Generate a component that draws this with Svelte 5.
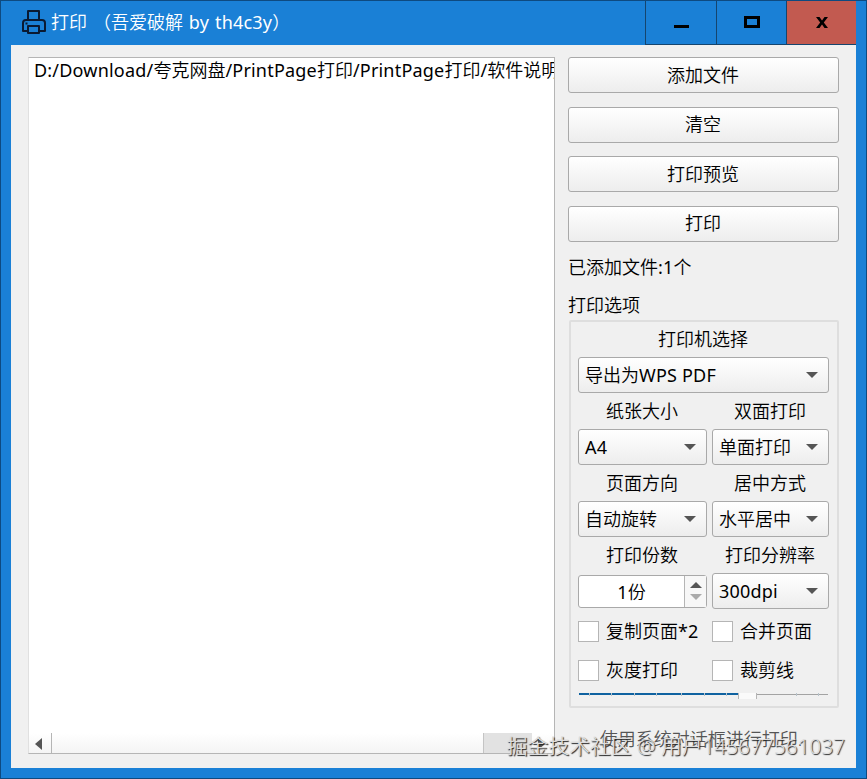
<script lang="ts">
  interface Field {
    label: string;
    value: string;
    kind?: "select" | "spin";
  }

  let files = $state(["D:/Download/夸克网盘/PrintPage打印/PrintPage打印/软件说明"]);
  let level = $state(68);

  const actions = ["添加文件", "清空", "打印预览", "打印"];

  const fields: Field[] = [
    { label: "纸张大小", value: "A4" },
    { label: "双面打印", value: "单面打印" },
    { label: "页面方向", value: "自动旋转" },
    { label: "居中方式", value: "水平居中" },
    { label: "打印份数", value: "1份", kind: "spin" },
    { label: "打印分辨率", value: "300dpi" }
  ];

  const checks = ["复制页面*2", "合并页面", "灰度打印", "裁剪线"];
  const ticks = [4, 13, 22, 31, 41, 50, 59, 87, 96];

  // latin runs get a heavier weight than the chinese around them
  function runs(value: string) {
    return value.match(/[\x20-\x7e]+|[^\x20-\x7e]+/g) ?? [];
  }
</script>

{#snippet mixed(value: string)}{#each runs(value) as run}<span class:latin={run.charCodeAt(0) < 127}>{run}</span>{/each}{/snippet}

{#snippet combo(value: string)}
  <button class="combo">
    <span>{@render mixed(value)}</span>
    <svg width="12" height="6" viewBox="0 0 12 6"><path d="M0 0H12L6 6Z" fill="#555" /></svg>
  </button>
{/snippet}

<div class="window">
  <header>
    <svg class="printer" width="26" height="26" viewBox="0 0 26 26">
      <g fill="none" stroke="#0a1a33" stroke-width="2" stroke-linejoin="round">
        <path d="M7 11V2H18V11" />
        <path d="M7 22H2V14Q2 11 5 11H21Q24 11 24 14V22H18" />
        <path d="M7 17H18V24H7Z" />
      </g>
      <rect x="4.500" y="13.500" width="2" height="2" fill="#0a1a33" />
    </svg>
    <h1>{@render mixed("打印 （吾爱破解 by th4c3y）")}</h1>
    <div class="controls">
      <button aria-label="minimize"><svg width="16" height="16"><path d="M1 11.500H16" stroke="#000" stroke-width="3" /></svg></button>
      <button aria-label="maximize"><svg width="16" height="16"><rect x="1.500" y="2.500" width="13" height="9" fill="none" stroke="#000" stroke-width="3" /></svg></button>
      <button class="close" aria-label="close"><svg width="14" height="14"><path d="M1 1H4.500L7 4.500 9.500 1H13L8.800 6.500 13 12H9.500L7 8.500 4.500 12H1L5.200 6.500Z" fill="#000" /></svg></button>
    </div>
  </header>

  <main>
    <section class="list">
      <ul>
        {#each files as file}
          <li>{@render mixed(file)}</li>
        {/each}
      </ul>
      <div class="scroll">
        <div class="arrow"><svg width="7" height="12"><path d="M7 0V12L0 6Z" fill="#555" /></svg></div>
        <div class="thumb"></div>
        <div class="track"></div>
        <div class="arrow right"><svg width="7" height="12"><path d="M0 0V12L7 6Z" fill="#555" /></svg></div>
      </div>
    </section>

    <aside>
      <div class="actions">
        {#each actions as action}
          <button>{action}</button>
        {/each}
      </div>
      <p class="count">{@render mixed(`已添加文件:${files.length}个`)}</p>
      <p class="legend">打印选项</p>

      <div class="group">
        <div class="field wide">
          <div class="label">打印机选择</div>
          {@render combo("导出为WPS PDF")}
        </div>
        {#each fields as field}
          <div class="field">
            <div class="label">{field.label}</div>
            {#if field.kind === "spin"}
              <div class="spin">
                <div class="value">{@render mixed(field.value)}</div>
                <div class="steps">
                  <svg width="12" height="6"><path d="M0 6H12L6 0Z" fill="#555" /></svg>
                  <svg width="12" height="6"><path d="M0 0H12L6 6Z" fill="#aaa" /></svg>
                </div>
              </div>
            {:else}
              {@render combo(field.value)}
            {/if}
          </div>
        {/each}
        {#each checks as check, i}
          <label class="check" class:last={i > 1}>
            <input type="checkbox" />
            <span>{@render mixed(check)}</span>
          </label>
        {/each}
        <div class="slider">
          <div class="fill" style="width: {level}%"></div>
          {#each ticks as tick}
            <i style="left: {tick}%"></i>
          {/each}
          <div class="knob" style="left: {level - 4}%"></div>
        </div>
      </div>

      <p class="dialog">使用系统对话框进行打印.</p>
    </aside>
  </main>

  <div class="watermark">掘金技术社区 @ 用户145677561037</div>
</div>

<style>
  .window {
    position: relative;
    box-sizing: border-box;
    width: 867px;
    height: 779px;
    padding: 0 10px 10px;
    border: 1px solid #0e4a80;
    background: #1a80d6;
    color: #000;
    font: 350 18px/24px "Noto Sans", "Noto Sans CJK SC", sans-serif;
    overflow: hidden;
  }

  .latin {
    font-weight: 400;
    letter-spacing: 0.2px;
  }

  button {
    font: inherit;
    color: inherit;
    padding: 0;
    box-sizing: border-box;
  }

  svg {
    display: block;
  }

  header {
    display: flex;
    align-items: center;
    height: 44px;
  }

  .printer {
    margin: 0 4px 2px 10px;
  }

  h1 {
    flex: 1;
    margin: 0 0 2px;
    color: #fff;
    font-size: 18px;
    font-weight: 350;
    white-space: nowrap;
    word-spacing: 1px;
  }

  .controls {
    display: flex;
    height: 44px;
    align-self: flex-start;
  }

  .controls button {
    display: grid;
    place-items: center;
    width: 71px;
    border: 0;
    border-left: 1px solid #15456e;
    border-bottom: 1px solid #15456e;
    background: none;
  }

  .controls button:nth-child(2) {
    width: 70px;
  }

  .controls .close {
    width: 70px;
    background: #c25a50;
  }

  main {
    display: flex;
    box-sizing: border-box;
    height: 723px;
    padding: 12px 17px 0;
    background: #f0f0f0;
  }

  .list {
    display: flex;
    flex-direction: column;
    box-sizing: border-box;
    width: 527px;
    height: 697px;
    border: 1px solid #b5b5b5;
    border-left-color: #e0e0e0;
    background: #fff;
  }

  ul {
    flex: 1;
    margin: 0;
    padding: 0 0 0 5px;
    list-style: none;
    overflow: hidden;
    white-space: nowrap;
  }

  .scroll {
    display: flex;
    height: 20px;
    background: linear-gradient(#fff, #f4f4f4);
  }

  .arrow {
    display: grid;
    place-items: center;
    width: 22px;
    border-right: 1px solid #b5b5b5;
  }

  .arrow svg {
    margin: 2px 3px 0 0;
  }

  .thumb {
    width: 431px;
    border-right: 1px solid #c4c4c4;
  }

  .track {
    width: 48px;
    background: #e2e2e2;
  }

  .arrow.right {
    border: 0;
  }

  aside {
    width: 271px;
    margin-left: 13px;
  }

  .actions {
    display: flex;
    flex-direction: column;
    gap: 13.67px;
  }

  .actions button,
  .combo {
    height: 36px;
    border: 1px solid #a9a9a9;
    border-radius: 3px;
    background: linear-gradient(#fff, #ededed);
  }

  .actions button {
    padding: 0 1px 1px 0;
  }

  p {
    margin: 0;
    line-height: 28px;
  }

  .count {
    margin-top: 11px;
  }

  .legend {
    margin-top: 10px;
  }

  .group {
    display: grid;
    grid-template-columns: 129px 117px;
    column-gap: 5px;
    box-sizing: border-box;
    width: 270px;
    height: 388px;
    margin: 1px 0 0 1px;
    padding: 0 7px;
    border: 2px solid #dedede;
    border-radius: 2px;
    align-content: start;
  }

  .wide,
  .slider {
    grid-column: 1 / -1;
  }

  .label {
    height: 36px;
    padding-right: 1px;
    line-height: 36px;
    text-align: center;
  }

  .wide .label {
    height: 35px;
    line-height: 35px;
  }

  .combo {
    display: flex;
    align-items: center;
    justify-content: space-between;
    width: 100%;
    padding: 0 10px 0 6px;
    white-space: nowrap;
  }

  .spin {
    display: flex;
    box-sizing: border-box;
    height: 33px;
    margin: 2px 0 1px;
    border: 1px solid #a9a9a9;
    border-radius: 3px;
    background: #fff;
    line-height: 33px;
  }

  .value {
    flex: 1;
    text-align: center;
  }

  .steps {
    display: flex;
    flex-direction: column;
    align-items: center;
    justify-content: center;
    gap: 6px;
    width: 21px;
    border-left: 1px solid #b5b5b5;
    background: #f7f7f7;
  }

  .check {
    display: flex;
    align-items: center;
    gap: 7px;
    height: 45px;
    white-space: nowrap;
  }

  .check.last {
    height: 33px;
  }

  input {
    appearance: none;
    box-sizing: border-box;
    width: 21px;
    height: 21px;
    margin: 0;
    border: 1px solid #b5b5b5;
    background: #fff;
  }

  .slider {
    position: relative;
    height: 1px;
    margin: 7px 1px 0;
    background: #a3a3a3;
  }

  .fill {
    position: relative;
    top: -1px;
    height: 2px;
    background: #0f62a0;
  }

  .slider i {
    position: absolute;
    top: -1px;
    width: 1px;
    height: 3px;
    background: #b8c4cc;
  }

  .knob {
    position: absolute;
    top: -1px;
    box-sizing: border-box;
    width: 19px;
    height: 6px;
    border: 1px solid #b5b5b5;
    border-width: 0 1px;
    background: #fafafa;
  }

  .dialog {
    margin: 17px 5px 0 0;
    color: #555;
    text-align: center;
  }

  .watermark {
    position: absolute;
    right: 21px;
    bottom: 18px;
    color: #ddd;
    font-size: 20.8px;
    line-height: 28px;
    text-shadow: 1px 1px 1px #222;
    white-space: nowrap;
  }
</style>
